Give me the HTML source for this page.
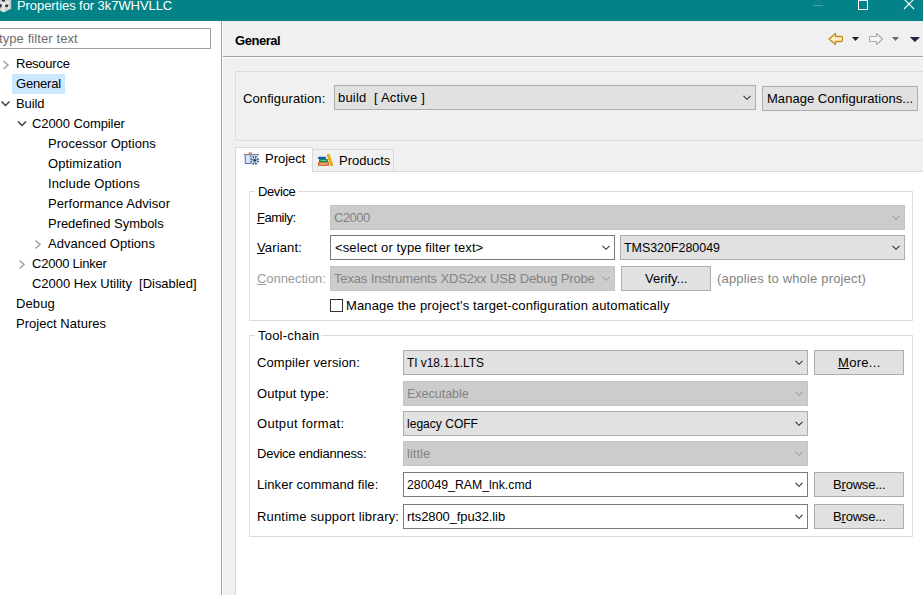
<!DOCTYPE html>
<html><head><meta charset="utf-8">
<style>
html,body{margin:0;padding:0;}
body{width:923px;height:595px;overflow:hidden;position:relative;background:#f0f0f0;font-family:"Liberation Sans",sans-serif;font-size:13px;color:#000;}
.a{position:absolute;}
.t{position:absolute;white-space:pre;line-height:15px;height:15px;}
.box{position:absolute;box-sizing:border-box;}
.ro{background:#e1e1e1;border:1px solid #adadad;}
.dis{background:#cccccc;border:1px solid #c4c4c4;}
.ed{background:#fff;border:1px solid #7a7a7a;}
.btn{background:#e1e1e1;border:1px solid #adadad;}
.grp{position:absolute;box-sizing:border-box;border:1px solid #dcdcdc;}
.lgray{color:#9b9b9b;}
.dgray{color:#838383;}
.chev{position:absolute;}
.ul{text-decoration:underline;text-decoration-thickness:1px;text-underline-offset:1px;}
</style></head><body>
<div class="a" style="left:0px;top:0px;width:923px;height:21px;background:#038387;"></div>
<div class="a" style="left:0px;top:21px;width:221px;height:574px;background:#fff;"></div>
<div class="a" style="left:221px;top:21px;width:1px;height:574px;background:#a0a0a0;"></div>
<div class="a" style="left:222px;top:21px;width:1px;height:574px;background:#fff;"></div>
<div class="t" style="left:17px;top:-2px;letter-spacing:-0.068px;color:#fff;">Properties for 3k7WHVLLC</div>
<svg class="a" style="left:0;top:0" width="13" height="14" viewBox="0 0 13 14">
<path d="M0 0 L11.2 0 L11.2 8.8 L3.6 12.6 L0 10.4 Z" fill="#d4d4d4"/>
<path d="M1 2.5 L5 4.5 L9 2 M3.5 4.5 L3.5 11.5" stroke="#f2f2f2" stroke-width="1.6" fill="none"/>
<path d="M8 8 L10.5 6.5" stroke="#ececec" stroke-width="1.2"/>
<ellipse cx="0.4" cy="5.8" rx="1.4" ry="1.7" fill="#2e2e2e"/><ellipse cx="6.6" cy="5.8" rx="1.6" ry="1.5" fill="#3a3a3a"/><ellipse cx="3.4" cy="0.4" rx="1.6" ry="1.2" fill="#2e2e2e"/>
<path d="M8.5 1 L10.5 2 L10.5 8" stroke="#bdbdbd" stroke-width="0.8" fill="none"/>
</svg>
<div class="a" style="left:813px;top:5px;width:10px;height:1px;background:#4ea2a6;"></div>
<div class="a" style="left:858px;top:0px;width:10px;height:10px;border:1px solid #fff;box-sizing:border-box;"></div>
<svg class="a" style="left:903px;top:-1px" width="12" height="12" viewBox="0 0 12 12"><path d="M1 0 L11 10 M11 0 L1 10" stroke="#fff" stroke-width="1.1"/></svg>
<div class="box " style="left:-10px;top:28px;width:221px;height:21px;border:1px solid #a0a0a0;background:#fff;"></div>
<div class="t" style="left:-1px;top:31px;letter-spacing:0.090px;color:#6d6d6d;">type filter text</div>
<div class="a" style="left:12px;top:74px;width:53px;height:20px;background:#cce8ff;"></div>
<svg class="a" style="left:0;top:55px" width="50" height="220" viewBox="0 55 50 220">
<path d="M3.5 61 L8 65 L3.5 69" stroke="#a0a0a0" stroke-width="1.5" fill="none"/>
<path d="M1.5 101.5 L5.5 105.5 L9.5 101.5" stroke="#3d3d3d" stroke-width="1.5" fill="none"/>
<path d="M18 121.5 L22 125.5 L26 121.5" stroke="#3d3d3d" stroke-width="1.5" fill="none"/>
<path d="M35.5 240.5 L40 244.5 L35.5 248.5" stroke="#a0a0a0" stroke-width="1.5" fill="none"/>
<path d="M19.5 260.5 L24 264.5 L19.5 268.5" stroke="#a0a0a0" stroke-width="1.5" fill="none"/>
</svg>
<div class="t" style="left:16px;top:56px;letter-spacing:-0.250px;">Resource</div>
<div class="t" style="left:16px;top:76px;letter-spacing:-0.180px;">General</div>
<div class="t" style="left:16px;top:96px;letter-spacing:-0.100px;">Build</div>
<div class="t" style="left:32px;top:116px;letter-spacing:-0.080px;">C2000 Compiler</div>
<div class="t" style="left:48px;top:136px;letter-spacing:0.054px;">Processor Options</div>
<div class="t" style="left:48px;top:156px;letter-spacing:0.118px;">Optimization</div>
<div class="t" style="left:48px;top:176px;letter-spacing:0.093px;">Include Options</div>
<div class="t" style="left:48px;top:196px;letter-spacing:0.072px;">Performance Advisor</div>
<div class="t" style="left:48px;top:216px;letter-spacing:-0.038px;">Predefined Symbols</div>
<div class="t" style="left:48px;top:236px;letter-spacing:0.043px;">Advanced Options</div>
<div class="t" style="left:32px;top:256px;letter-spacing:-0.236px;">C2000 Linker</div>
<div class="t" style="left:32px;top:276px;letter-spacing:-0.030px;">C2000 Hex Utility  [Disabled]</div>
<div class="t" style="left:16px;top:296px;letter-spacing:0.100px;">Debug</div>
<div class="t" style="left:16px;top:316px;letter-spacing:0.030px;">Project Natures</div>
<div class="t" style="left:235px;top:33px;letter-spacing:-0.450px;font-weight:bold;font-size:13px;">General</div>
<div class="a" style="left:223px;top:56px;width:700px;height:1px;background:#a0a0a0;"></div>
<div class="a" style="left:223px;top:57px;width:700px;height:1px;background:#fff;"></div>
<svg class="a" style="left:826px;top:30px" width="96" height="18" viewBox="0 0 96 18">
<defs><linearGradient id="gy" x1="0" y1="0" x2="0" y2="1"><stop offset="0" stop-color="#fffbe8"/><stop offset="1" stop-color="#fbe7a0"/></linearGradient></defs>
<path d="M3 9 L9.5 3.5 L9.5 6.5 L15 6.5 Q16.5 6.5 16.5 8 L16.5 10 Q16.5 11.5 15 11.5 L9.5 11.5 L9.5 14.5 Z" fill="url(#gy)" stroke="#c48a1c" stroke-width="1.3" stroke-linejoin="round"/>
<path d="M26 7 L33 7 L29.5 11 Z" fill="#1e1e1e"/>
<path d="M56.5 9 L50.5 3.5 L50.5 6.5 L44.5 6.5 Q43.5 6.5 43.5 7.5 L43.5 10.5 Q43.5 11.5 44.5 11.5 L50.5 11.5 L50.5 14.5 Z" fill="#f6f6f6" stroke="#ababab" stroke-width="1.1" stroke-linejoin="round"/>
<path d="M66 7 L73 7 L69.5 11 Z" fill="#6a6a6a"/>
<path d="M84 7 L94 7 L89 12 Z" fill="#2e2438"/>
<path d="M84 7 L89 12" stroke="#6a3cc8" stroke-width="0.8"/>
</svg>
<div class="box grp" style="left:235px;top:71px;width:700px;height:70px;"></div>
<div class="t" style="left:243px;top:91px;letter-spacing:0.100px;">Configuration:</div>
<div class="box ro" style="left:334px;top:85px;width:422px;height:25px;"></div>
<div class="t" style="left:338px;top:90px;letter-spacing:0.190px;">build  [ Active ]</div>
<svg class="chev" style="left:742px;top:95px" width="9" height="6" viewBox="0 0 9 6"><path d="M1.5 0.8 L5 4.3 L8.5 0.8" stroke="#303030" stroke-width="1.05" fill="none"/></svg>
<div class="box btn" style="left:762px;top:86px;width:156px;height:25px;"></div>
<div class="t" style="left:767px;top:91px;letter-spacing:0.040px;">Manage Configurations...</div>
<div class="box" style="left:235px;top:171px;width:700px;height:430px;background:#fff;border-top:1px solid #d9d9d9;border-left:1px solid #d9d9d9;"></div>
<div class="box " style="left:312px;top:149px;width:82px;height:23px;background:#f0f0f0;border:1px solid #d9d9d9;"></div>
<div class="box " style="left:235px;top:147px;width:78px;height:25px;background:#fff;border:1px solid #d9d9d9;border-bottom:none;"></div>
<div class="t" style="left:265px;top:151px;">Project</div>
<div class="t" style="left:339px;top:153px;">Products</div>
<svg class="a" style="left:240px;top:148px" width="24" height="20" viewBox="0 0 24 20">
<path d="M8 5.5 L8.8 4 L11.6 4 L12.4 5.5 Z" fill="#c8a8a0"/>
<rect x="8.5" y="5" width="3.5" height="1" fill="#f0a070"/>
<rect x="4" y="6" width="15" height="1.4" fill="#8c7f8c"/>
<path d="M5.2 7.4 L18 7.4 L18 15.5 L5.2 15.5 Z" fill="#c6dcf2"/>
<path d="M5.2 7.4 L5.2 15.5 L12 15.5" stroke="#5a68c0" stroke-width="1" fill="none"/>
<rect x="6.5" y="8" width="3" height="7" fill="#d8e8f8"/>
<circle cx="14.6" cy="12.3" r="4.4" fill="#24508c"/>
<path d="M11.4 9.1 L17.8 15.5 M17.8 9.1 L11.4 15.5" stroke="#fff" stroke-width="1.3"/>
<path d="M14.6 7.6 L14.6 17 M9.9 12.3 L19.3 12.3" stroke="#fff" stroke-width="0.9"/>
<circle cx="14.6" cy="12.3" r="1.5" fill="#1c3a6a"/>
<circle cx="10.5" cy="8.3" r="0.8" fill="#2060b0"/>
</svg>
<svg class="a" style="left:314px;top:148px" width="24" height="22" viewBox="0 0 24 22">
<rect x="4" y="8.7" width="8" height="2.2" rx="0.8" fill="#0c5cb4"/>
<rect x="5" y="11" width="9" height="3" rx="0.4" fill="#18884a"/>
<rect x="6.5" y="12" width="6" height="0.9" fill="#80cc98"/>
<rect x="4" y="14.2" width="11" height="3.6" fill="#c85c22"/>
<rect x="5.3" y="15.1" width="8.4" height="1.7" fill="#e8a878"/>
<path d="M14.3 7.2 L17.6 16.8" stroke="#e0a000" stroke-width="2.8" stroke-linecap="round"/>
<path d="M14.4 7.6 L17.4 16.4" stroke="#ffcc33" stroke-width="1.1" stroke-dasharray="1.3 1"/>
</svg>
<div class="box grp" style="left:249px;top:191px;width:664px;height:130px;"></div>
<div class="a" style="left:255px;top:185px;width:43px;height:12px;background:#fff;"></div>
<div class="t" style="left:258px;top:184px;letter-spacing:-0.400px;">Device</div>
<div class="t" style="left:257px;top:210px;letter-spacing:-0.480px;"><span class="ul">F</span>amily:</div>
<div class="box dis" style="left:330px;top:205px;width:575px;height:25px;"></div>
<div class="t" style="left:334px;top:210px;letter-spacing:-0.500px;color:#838383;">C2000</div>
<svg class="chev" style="left:891px;top:215px" width="9" height="6" viewBox="0 0 9 6"><path d="M1.5 0.8 L5 4.3 L8.5 0.8" stroke="#a0a0a0" stroke-width="1.05" fill="none"/></svg>
<div class="t" style="left:257px;top:240px;letter-spacing:0.130px;"><span class="ul">V</span>ariant:</div>
<div class="box ed" style="left:330px;top:235px;width:285px;height:25px;"></div>
<div class="t" style="left:335px;top:240px;letter-spacing:0.110px;">&lt;select or type filter text&gt;</div>
<svg class="chev" style="left:601px;top:245px" width="9" height="6" viewBox="0 0 9 6"><path d="M1.5 0.8 L5 4.3 L8.5 0.8" stroke="#303030" stroke-width="1.05" fill="none"/></svg>
<div class="box ro" style="left:620px;top:235px;width:285px;height:25px;"></div>
<div class="t" style="left:624px;top:240px;transform:scaleX(0.9552);transform-origin:0 0;">TMS320F280049</div>
<svg class="chev" style="left:891px;top:245px" width="9" height="6" viewBox="0 0 9 6"><path d="M1.5 0.8 L5 4.3 L8.5 0.8" stroke="#303030" stroke-width="1.05" fill="none"/></svg>
<div class="t" style="left:257px;top:271px;letter-spacing:-0.055px;color:#9b9b9b;"><span class="ul">C</span>onnection:</div>
<div class="box dis" style="left:330px;top:266px;width:285px;height:25px;"></div>
<div class="t" style="left:334px;top:271px;letter-spacing:-0.150px;color:#838383;">Texas Instruments XDS2xx USB Debug Probe</div>
<svg class="chev" style="left:601px;top:276px" width="9" height="6" viewBox="0 0 9 6"><path d="M1.5 0.8 L5 4.3 L8.5 0.8" stroke="#a0a0a0" stroke-width="1.05" fill="none"/></svg>
<div class="box btn" style="left:621px;top:266px;width:90px;height:25px;"></div>
<div class="t" style="left:645px;top:271px;">Verify...</div>
<div class="t" style="left:717px;top:271px;letter-spacing:0.170px;color:#838383;">(applies to whole project)</div>
<div class="box " style="left:330px;top:299px;width:13px;height:13px;border:1px solid #333;background:#fff;"></div>
<div class="t" style="left:346px;top:298px;letter-spacing:0.150px;">Manage the project's target-configuration automatically</div>
<div class="box grp" style="left:249px;top:335px;width:664px;height:202px;"></div>
<div class="a" style="left:255px;top:329px;width:66px;height:12px;background:#fff;"></div>
<div class="t" style="left:258px;top:328px;letter-spacing:0.220px;">Tool-chain</div>
<div class="t" style="left:257px;top:355px;letter-spacing:0.100px;">Compiler version:</div>
<div class="box ro" style="left:403px;top:350px;width:405px;height:25px;"></div>
<div class="t" style="left:407px;top:355px;transform:scaleX(0.9122);transform-origin:0 0;">TI v18.1.1.LTS</div>
<svg class="chev" style="left:794px;top:360px" width="9" height="6" viewBox="0 0 9 6"><path d="M1.5 0.8 L5 4.3 L8.5 0.8" stroke="#303030" stroke-width="1.05" fill="none"/></svg>
<div class="box btn" style="left:814px;top:350px;width:90px;height:25px;"></div>
<div class="t" style="left:838px;top:355px;letter-spacing:0.300px;"><span class="ul">M</span>ore...</div>
<div class="t" style="left:257px;top:386px;letter-spacing:0.090px;">Output type:</div>
<div class="box dis" style="left:403px;top:381px;width:405px;height:25px;"></div>
<div class="t" style="left:407px;top:386px;transform:scaleX(0.9596);transform-origin:0 0;color:#838383;">Executable</div>
<svg class="chev" style="left:794px;top:391px" width="9" height="6" viewBox="0 0 9 6"><path d="M1.5 0.8 L5 4.3 L8.5 0.8" stroke="#a0a0a0" stroke-width="1.05" fill="none"/></svg>
<div class="t" style="left:257px;top:416px;letter-spacing:0.300px;">Output format:</div>
<div class="box ro" style="left:403px;top:411px;width:405px;height:25px;"></div>
<div class="t" style="left:407px;top:416px;transform:scaleX(0.9269);transform-origin:0 0;">legacy COFF</div>
<svg class="chev" style="left:794px;top:421px" width="9" height="6" viewBox="0 0 9 6"><path d="M1.5 0.8 L5 4.3 L8.5 0.8" stroke="#303030" stroke-width="1.05" fill="none"/></svg>
<div class="t" style="left:257px;top:446px;letter-spacing:-0.230px;">Device endianness:</div>
<div class="box dis" style="left:403px;top:441px;width:405px;height:25px;"></div>
<div class="t" style="left:407px;top:446px;color:#838383;">little</div>
<svg class="chev" style="left:794px;top:451px" width="9" height="6" viewBox="0 0 9 6"><path d="M1.5 0.8 L5 4.3 L8.5 0.8" stroke="#a0a0a0" stroke-width="1.05" fill="none"/></svg>
<div class="t" style="left:257px;top:477px;letter-spacing:0.070px;">Linker command file:</div>
<div class="box ed" style="left:403px;top:472px;width:405px;height:25px;"></div>
<div class="t" style="left:407px;top:477px;transform:scaleX(0.9468);transform-origin:0 0;">280049_RAM_lnk.cmd</div>
<svg class="chev" style="left:794px;top:482px" width="9" height="6" viewBox="0 0 9 6"><path d="M1.5 0.8 L5 4.3 L8.5 0.8" stroke="#303030" stroke-width="1.05" fill="none"/></svg>
<div class="box btn" style="left:814px;top:472px;width:90px;height:25px;"></div>
<div class="t" style="left:833px;top:477px;letter-spacing:-0.200px;">B<span class="ul">r</span>owse...</div>
<div class="t" style="left:257px;top:509px;letter-spacing:0.170px;">Runtime support library:</div>
<div class="box ed" style="left:403px;top:504px;width:405px;height:25px;"></div>
<div class="t" style="left:407px;top:509px;letter-spacing:-0.100px;">rts2800_fpu32.lib</div>
<svg class="chev" style="left:794px;top:514px" width="9" height="6" viewBox="0 0 9 6"><path d="M1.5 0.8 L5 4.3 L8.5 0.8" stroke="#303030" stroke-width="1.05" fill="none"/></svg>
<div class="box btn" style="left:814px;top:504px;width:90px;height:25px;"></div>
<div class="t" style="left:833px;top:509px;letter-spacing:-0.200px;">B<span class="ul">r</span>owse...</div>
</body></html>
